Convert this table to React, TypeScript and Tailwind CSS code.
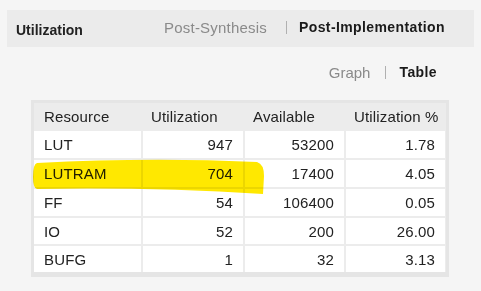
const rows = [
    { name: "LUT", used: "947", avail: "53200", pct: "1.78" },
    { name: "LUTRAM", used: "704", avail: "17400", pct: "4.05" },
    { name: "FF", used: "54", avail: "106400", pct: "0.05" },
    { name: "IO", used: "52", avail: "200", pct: "26.00" },
    { name: "BUFG", used: "1", avail: "32", pct: "3.13" },
]

const rowHeights = ["h-[27px]", "h-[27px]", "h-[27px]", "h-[26px]", "h-[26px]"]

export default function App() {
    return (
        <div className="w-[481px] h-[291px] bg-[#f5f5f5] pt-[10px] px-[7px] text-[#222] font-['Liberation_Sans',Arial,sans-serif] relative overflow-hidden">
            {/* title bar */}
            <div className="h-[37px] bg-[#ebebeb] flex items-center pl-[9px] pr-[29px]">
                <div className="text-[14px] font-bold pt-[3px]">Utilization</div>
                <div className="ml-auto flex items-center text-[15px] leading-none pb-[3px]">
                    <span className="text-[#8a8a8a] tracking-[0.2px]">Post-Synthesis</span>
                    <span className="ml-[19px] mr-[12px] w-px h-[13px] bg-[#b0b0b0]"></span>
                    <span className="text-[14px] font-bold text-[#1a1a1a] tracking-[0.4px]">Post-Implementation</span>
                </div>
            </div>

            {/* view toggle */}
            <div className="flex items-center justify-end pr-[37px] mt-[18px] h-[14px] leading-none">
                <span className="text-[15px] text-[#8a8a8a]">Graph</span>
                <span className="ml-[15px] mr-[13px] w-px h-[13px] bg-[#b0b0b0]"></span>
                <span className="text-[14px] font-bold text-[#1a1a1a] tracking-[0.4px]">Table</span>
            </div>

            {/* table */}
            <div className="mt-[21px] ml-[24px] w-[418px] bg-[#e5e5e5] p-[3px] pb-[5px]">
                <div className="grid grid-cols-[107px_100px_99px_99px] gap-[2px] bg-[#ececec] text-[15px] leading-none tracking-[0.15px]">
                    {["Resource", "Utilization", "Available", "Utilization %"].map((h, j) => (
                        <div key={h} className={`h-[26px] bg-[#ececec] flex items-center pt-[1px] ${j === 0 ? "pl-[10px]" : "pl-[8px]"}`}>{h}</div>
                    ))}
                    {rows.map((r, i) => (
                        [r.name, r.used, r.avail, r.pct].map((v, j) => (
                            <div
                                key={`${i}-${j}`}
                                className={`${rowHeights[i]} bg-white flex items-center ${j === 0 ? "pl-[10px]" : "justify-end pr-[10px]"}`}
                            >
                                {v}
                            </div>
                        ))
                    ))}
                </div>
            </div>

            {/* yellow highlighter stroke */}
            <svg className="absolute left-0 top-0 mix-blend-multiply pointer-events-none" width="481" height="291">
                <path
                    d="M37 163 Q150 157 257 162 Q264 164 264 176 L263 194 Q150 187 37 189 Q33 188 33 177 Q33 164 37 163 Z"
                    fill="#ffe800"
                />
            </svg>
        </div>
    )
}
